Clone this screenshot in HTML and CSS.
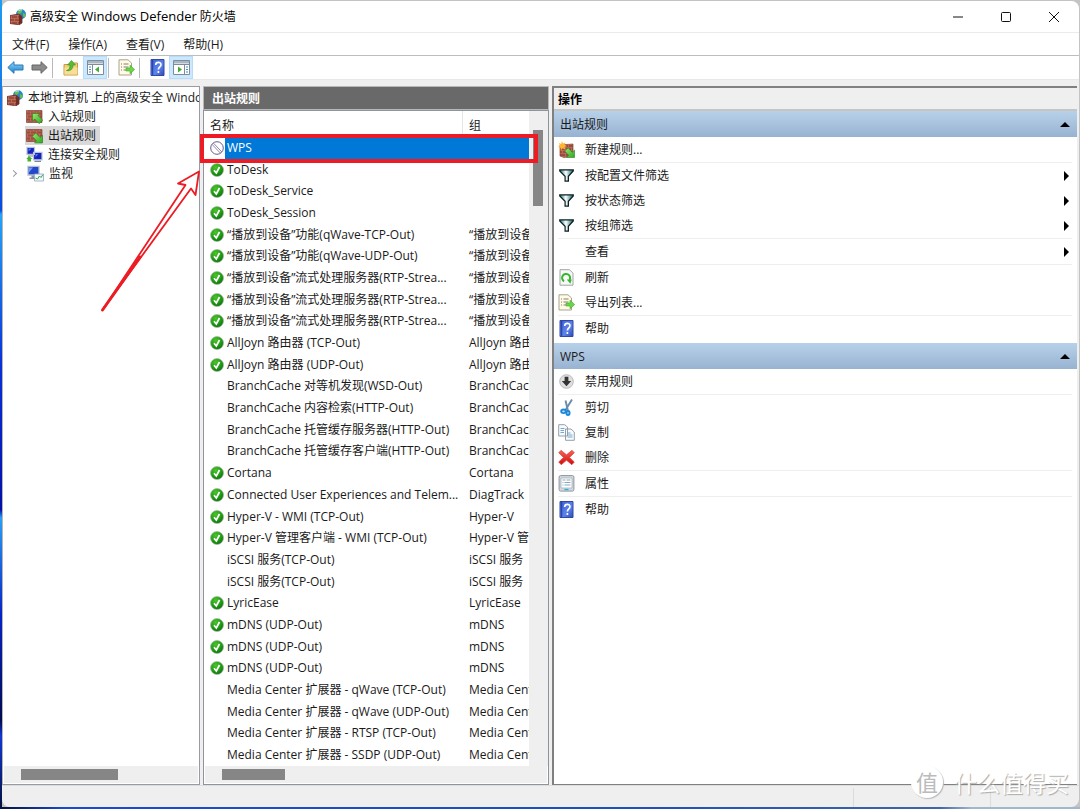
FILE: index.html
```html
<!DOCTYPE html>
<html lang="zh-CN">
<head>
<meta charset="utf-8">
<title>高级安全 Windows Defender 防火墙</title>
<link rel="stylesheet" href="styles.css">
</head>
<body>
<svg class="defs" aria-hidden="true">
  <defs>
    <radialGradient id="gGreen" cx=".4" cy=".3" r=".75"><stop offset="0" stop-color="#4cc42c"/><stop offset=".6" stop-color="#1f9a14"/><stop offset="1" stop-color="#0c6a0c"/></radialGradient>
    <linearGradient id="gBlue" x1="0" y1="0" x2="0" y2="1"><stop offset="0" stop-color="#8fd4f7"/><stop offset="1" stop-color="#1583cf"/></linearGradient>
    <linearGradient id="gHelp" x1="0" y1="0" x2="1" y2="1"><stop offset="0" stop-color="#3d62d8"/><stop offset=".6" stop-color="#5d83ea"/><stop offset="1" stop-color="#2d48b0"/></linearGradient>
    <linearGradient id="gArrow" x1="0" y1="0" x2="1" y2="1"><stop offset="0" stop-color="#9be86e"/><stop offset="1" stop-color="#2fa524"/></linearGradient>
    <linearGradient id="gRed" x1="0" y1="0" x2="0" y2="1"><stop offset="0" stop-color="#f4655c"/><stop offset="1" stop-color="#d40a08"/></linearGradient>
    <linearGradient id="gFunnel" x1="0" y1="0" x2="1" y2="0"><stop offset="0" stop-color="#0e8080"/><stop offset=".45" stop-color="#ffffff"/><stop offset="1" stop-color="#0b5f66"/></linearGradient>
    <pattern id="brick" width="6" height="6" patternUnits="userSpaceOnUse"><rect width="6" height="6" fill="#a04a3a"/><path d="M0 .5h6M0 3.5h6M1.500 .5v3M4.500 3.500v3" stroke="#c08072" stroke-width=".6"/></pattern>
  </defs>
  <symbol id="wall" viewBox="0 0 16 16"><circle cx="11" cy="5.200" r="5" fill="#2a86c8"/><path d="M8 2c2-1.500 4-1 4 .5s-2 1.500-2 3-2 0-2.500-1zM13 4l3 1.500-1 3-2-1z" fill="#63c04c"/><path d="M8.500 1.500q2-1 3.500-.5" stroke="#d8f0fb" fill="none"/><path d="M0 6.500l9-1.500 3 2.500V14l-3 1.800-9-1.300z" fill="url(#brick)" stroke="#6e2a22" stroke-width=".8"/><path d="M9 5.500V15.500l3-2V7.500z" fill="#702c25"/></symbol>
  <symbol id="inbound" viewBox="0 0 17 16"><path d="M.5 2h15.500v12H.5z" fill="url(#brick)" stroke="#8d4034" stroke-width=".7"/><path d="M6.500 5h7.500l-2 2 4.700 4.500-3.500 3.700-4.500-4.700-2.200 2.200z" fill="url(#gArrow)" stroke="#25821d" stroke-width=".6"/></symbol>
  <symbol id="outbound" viewBox="0 0 17 16"><path d="M.5 2h15.500v12H.5z" fill="url(#brick)" stroke="#8d4034" stroke-width=".7"/><path d="M16.500 15.500H8.500l2.200-2.200-4.500-4.300L9.700 5.500l4.500 4.500 2.300-2.200z" fill="url(#gArrow)" stroke="#25821d" stroke-width=".6"/></symbol>
  <symbol id="newrule" viewBox="0 0 17 17"><path d="M2 4l13-1v12l-9 1.500L2 15z" fill="url(#brick)" stroke="#8d4034" stroke-width=".7"/><path d="M16.500 16.500H8.500l2.200-2.200-4-4.300 3.500-3.200 4 4.500 2.300-2.200z" fill="url(#gArrow)" stroke="#25821d" stroke-width=".6"/><path d="M4 0l1 2.500L7.500 1.500l-1 2.300L9 5 6.500 6l.8 2.500L4.500 7.300 3 9.500 2.500 6.800 0 6l2-1.500L.8 2l2.400 1z" fill="#ffb52e"/></symbol>
  <symbol id="network" viewBox="0 0 17 16"><path d="M1 .8h7.500v7H1zM7.500 5.800h8.500v7.500H7.500z" fill="#1623bd" stroke="#b9c3d6" stroke-width="1.200"/><path d="M2.500 2l3 0-3 3zM9.500 7.500h3l-3 3z" fill="#4f7cf0"/><path d="M2 9h5v1H2zM8.500 14.300h6.500v1.200H8.500z" fill="#7b8798"/><path d="M3 9.500l3.500 3H5v2.500H1.500v-2.500H.3z" fill="#46b52e"/></symbol>
  <symbol id="monitor" viewBox="0 0 17 16"><path d="M1 .8h11V9.500H1z" fill="#2548cb" stroke="#b4bfd2" stroke-width="1.300"/><path d="M2 2h4L2 7z" fill="#6f9bf5"/><path d="M4.500 10h3v2h-3zM2.500 12h7v1.500h-7z" fill="#8792a4"/><path d="M7.500 8.500h9v7h-9z" fill="#f2f7fb" stroke="#91a7bb" stroke-width=".8"/><path d="M8.500 12.500l2 1 2-3 1.500 1.500 2-3" stroke="#35a64d" fill="none"/></symbol>
  <symbol id="ok" viewBox="0 0 14 14"><circle cx="7" cy="7" r="6.500" fill="url(#gGreen)" stroke="#a5b8a0" stroke-width=".7"/><path d="M4 7.300l2.300 2.700L9.500 4" stroke="#fff" stroke-width="1.700" fill="none"/></symbol>
  <symbol id="block" viewBox="0 0 16 16"><circle cx="8" cy="8" r="7.200" fill="#fff" stroke="#64538a" stroke-width="1.100"/><path d="M4 2.500l9.500 10M2.500 4l9.500 10" stroke="#64538a" stroke-width=".8"/></symbol>
  <symbol id="back" viewBox="0 0 17 14"><path d="M.8 7L7 1.200v3.300h9v5H7v3.300z" fill="url(#gBlue)" stroke="#2c78b4"/></symbol>
  <symbol id="fwd" viewBox="0 0 17 14"><path d="M16.200 7L10 1.200v3.300H1v5h9v3.300z" fill="#8b8b8b" stroke="#646464"/></symbol>
  <symbol id="folder" viewBox="0 0 16 16"><path d="M1 4.500h5l1-1.500h7.500v12H1z" fill="#efcf78" stroke="#c39b45"/><path d="M1.500 7.500h13v7h-13z" fill="#f8df95"/><path d="M3.500 10.500C6 10 7 8 7 5H4.500L8.500.5l4 4.500H10c0 4-2.500 6.500-6.500 5.500z" fill="#57bd35" stroke="#38901f" stroke-width=".6"/></symbol>
  <symbol id="paneL" viewBox="0 0 17 15"><path d="M.5.5h16v14H.5z" fill="#fff" stroke="#7c8c9b"/><path d="M1 1h15v2.500H1z" fill="#a9b7c4"/><path d="M1 4.500h15" stroke="#7c8c9b"/><path d="M5.500 4.500v10" stroke="#7c8c9b"/><path d="M2 7h2M2 9.500h2M2 12h2" stroke="#4b88c0"/><path d="M12 6.500v6L8 9.500z" fill="#42ab32"/></symbol>
  <symbol id="paneR" viewBox="0 0 17 15"><path d="M.5.5h16v14H.5z" fill="#fff" stroke="#7c8c9b"/><path d="M1 1h15v2.500H1z" fill="#a9b7c4"/><path d="M1 4.500h15" stroke="#7c8c9b"/><path d="M11.500 4.500v10" stroke="#7c8c9b"/><path d="M13 7h2M13 9.500h2M13 12h2" stroke="#4b88c0"/><path d="M5 6.500v6l4-3z" fill="#42ab32"/></symbol>
  <symbol id="export" viewBox="0 0 17 17"><path d="M1 .8h9L13.500 4v12H1z" fill="#fffbe5" stroke="#aaa38b"/><path d="M3 5h1M3 8h1M3 11h1M5.500 5h5M5.500 8h5M5.500 11h3" stroke="#817f78" stroke-width="1.200"/><path d="M8 9h4V6.200l4.700 4.300-4.700 4.300V12H8z" fill="#68d744" stroke="#48a935" stroke-width=".6"/></symbol>
  <symbol id="help" viewBox="0 0 14 17"><path d="M.5.500h13v16H.5z" fill="url(#gHelp)" stroke="#3049a4"/><path d="M2.200 1v15" stroke="#233c99"/><path d="M5.200 6c0-3.500 5.300-3.300 5.300-.3 0 2-2.600 2.300-2.600 4.800M7.900 12v2" stroke="#fff" stroke-width="1.600" fill="none"/></symbol>
  <symbol id="funnel" viewBox="0 0 16 14"><path d="M.8 1h14.400v1.200L10 7.800V13H6.500V7.800L.8 2.200z" fill="url(#gFunnel)" stroke="#0c1f22" stroke-width="1.300"/></symbol>
  <symbol id="refresh" viewBox="0 0 15 17"><path d="M1 .7h9.500l3.500 3.500v12H1z" fill="#f7f8f7" stroke="#9fa5a0"/><path d="M5 12.300A4 4 0 1 1 10.500 11" stroke="#36b62d" stroke-width="2" fill="none"/><path d="M7.800 10.500h5l-1.500 4.300z" fill="#36b62d"/></symbol>
  <symbol id="disable" viewBox="0 0 16 16"><circle cx="8" cy="8" r="7.300" fill="#dedede" stroke="#a9a9a9" stroke-width=".8"/><path d="M6 3h4v4.500h3L8 13 3 7.500h3z" fill="#333"/></symbol>
  <symbol id="cut" viewBox="0 0 14 17"><path d="M12.500.5L6 11M6 1.500L8.500 12" stroke="#6b8ba7" stroke-width="1.900" fill="none"/><ellipse cx="4" cy="12.300" rx="2.300" ry="1.800" fill="#bfe2fb" stroke="#1b88dc" stroke-width="1.900"/><ellipse cx="8.500" cy="14" rx="1.600" ry="2" fill="#bfe2fb" stroke="#1b88dc" stroke-width="1.900"/></symbol>
  <symbol id="copy" viewBox="0 0 17 17"><path d="M.7.700h6L9.500 3v9H.7zM7.500 5h5.500L16.300 8v8.300H7.500z" fill="#f7fafc" stroke="#94a0aa"/><path d="M2.500 4.500h4M2.500 6.500h3.500M2.500 8.500h3.500M9.500 9h3M9.500 11h5M9.500 13h5" stroke="#7ba6cf"/></symbol>
  <symbol id="del" viewBox="0 0 17 16"><path d="M3 .8l5.500 4.500L14 .8l2.300 2.400L11.500 8l4.800 4.500-2.500 2.700-5.300-4.500-5.300 4.500L.7 12.500 5.500 8 .7 3.200z" fill="url(#gRed)" stroke="#d5453e" stroke-width=".7"/></symbol>
  <symbol id="props" viewBox="0 0 16 17"><rect x=".6" y=".6" width="14.800" height="15.500" rx="1.500" fill="#d5dade" stroke="#8c969e"/><path d="M2.500 3h11v10h-11z" fill="#fff" stroke="#9ba9b4" stroke-width=".7"/><path d="M4 5h3M8 5h4M4 7.500h1M6 7.500h6M4 10h1M6 10h6" stroke="#8aa6be"/><path d="M6 14.500h4" stroke="#21b4e3" stroke-width="1.300"/></symbol>
  <symbol id="up" viewBox="0 0 10 5"><path d="M0 5L5 0l5 5z"/></symbol>
  <symbol id="right" viewBox="0 0 5 10"><path d="M0 0l5 5-5 5z"/></symbol>
</svg>

<div class="window">
  <header class="titlebar">
    <svg class="i16"><use href="#wall"/></svg>
    <h1>高级安全 <span class="lat">Windows Defender</span> 防火墙</h1>
    <div class="winbtns">
      <button aria-label="最小化"><svg viewBox="0 0 12 12"><path d="M1 6h10"/></svg></button>
      <button aria-label="最大化"><svg viewBox="0 0 12 12"><rect x="1.500" y="1.500" width="9" height="9" rx="1"/></svg></button>
      <button aria-label="关闭"><svg viewBox="0 0 12 12"><path d="M1 1l10 10M11 1L1 11"/></svg></button>
    </div>
  </header>
  <nav class="menubar">
    <button>文件(F)</button><button>操作(A)</button><button>查看(V)</button><button>帮助(H)</button>
  </nav>
  <div class="toolbar">
    <button aria-label="后退"><svg class="i17"><use href="#back"/></svg></button>
    <button aria-label="前进"><svg class="i17"><use href="#fwd"/></svg></button>
    <span class="tsep"></span>
    <button aria-label="上一级"><svg class="i16"><use href="#folder"/></svg></button>
    <button class="on" aria-label="显示控制台树"><svg class="i17"><use href="#paneL"/></svg></button>
    <span class="tsep tight"></span>
    <button aria-label="导出列表"><svg class="i17"><use href="#export"/></svg></button>
    <span class="tsep tight"></span>
    <button aria-label="帮助"><svg class="i17"><use href="#help"/></svg></button>
    <button class="on" aria-label="显示操作窗格"><svg class="i17"><use href="#paneR"/></svg></button>
  </div>

  <main class="panes">
    <section class="pane tree">
      <ul class="nodes">
        <li class="root"><svg class="i16"><use href="#wall"/></svg><span>本地计算机 上的高级安全 Windows</span></li>
        <li><svg class="i17"><use href="#inbound"/></svg><span>入站规则</span></li>
        <li class="sel"><svg class="i17"><use href="#outbound"/></svg><span>出站规则</span></li>
        <li><svg class="i17"><use href="#network"/></svg><span>连接安全规则</span></li>
        <li class="parent"><svg class="i17"><use href="#monitor"/></svg><span>监视</span></li>
      </ul>
      <div class="hscroll"><div class="thumb wide"></div></div>
    </section>

    <section class="middle">
      <h2>出站规则</h2>
      <div class="list">
        <table>
          <thead><tr><th>名称</th><th>组</th></tr></thead>
          <tbody>
            <tr class="picked"><td><svg class="ic"><use href="#block"/></svg><span>WPS</span></td><td></td></tr>
            <tr><td><svg class="ic"><use href="#ok"/></svg><span>ToDesk</span></td><td></td></tr>
            <tr><td><svg class="ic"><use href="#ok"/></svg><span>ToDesk_Service</span></td><td></td></tr>
            <tr><td><svg class="ic"><use href="#ok"/></svg><span>ToDesk_Session</span></td><td></td></tr>
            <tr><td><svg class="ic"><use href="#ok"/></svg><span>“播放到设备”功能(qWave-TCP-Out)</span></td><td>“播放到设备”</td></tr>
            <tr><td><svg class="ic"><use href="#ok"/></svg><span>“播放到设备”功能(qWave-UDP-Out)</span></td><td>“播放到设备”</td></tr>
            <tr><td><svg class="ic"><use href="#ok"/></svg><span>“播放到设备”流式处理服务器(RTP-Strea...</span></td><td>“播放到设备”</td></tr>
            <tr><td><svg class="ic"><use href="#ok"/></svg><span>“播放到设备”流式处理服务器(RTP-Strea...</span></td><td>“播放到设备”</td></tr>
            <tr><td><svg class="ic"><use href="#ok"/></svg><span>“播放到设备”流式处理服务器(RTP-Strea...</span></td><td>“播放到设备”</td></tr>
            <tr><td><svg class="ic"><use href="#ok"/></svg><span>AllJoyn 路由器 (TCP-Out)</span></td><td>AllJoyn 路由器</td></tr>
            <tr><td><svg class="ic"><use href="#ok"/></svg><span>AllJoyn 路由器 (UDP-Out)</span></td><td>AllJoyn 路由器</td></tr>
            <tr><td><span>BranchCache 对等机发现(WSD-Out)</span></td><td>BranchCache</td></tr>
            <tr><td><span>BranchCache 内容检索(HTTP-Out)</span></td><td>BranchCache</td></tr>
            <tr><td><span>BranchCache 托管缓存服务器(HTTP-Out)</span></td><td>BranchCache</td></tr>
            <tr><td><span>BranchCache 托管缓存客户端(HTTP-Out)</span></td><td>BranchCache</td></tr>
            <tr><td><svg class="ic"><use href="#ok"/></svg><span>Cortana</span></td><td>Cortana</td></tr>
            <tr><td><svg class="ic"><use href="#ok"/></svg><span>Connected User Experiences and Telem...</span></td><td>DiagTrack</td></tr>
            <tr><td><svg class="ic"><use href="#ok"/></svg><span>Hyper-V - WMI (TCP-Out)</span></td><td>Hyper-V</td></tr>
            <tr><td><svg class="ic"><use href="#ok"/></svg><span>Hyper-V 管理客户端 - WMI (TCP-Out)</span></td><td>Hyper-V 管理</td></tr>
            <tr><td><span>iSCSI 服务(TCP-Out)</span></td><td>iSCSI 服务</td></tr>
            <tr><td><span>iSCSI 服务(TCP-Out)</span></td><td>iSCSI 服务</td></tr>
            <tr><td><svg class="ic"><use href="#ok"/></svg><span>LyricEase</span></td><td>LyricEase</td></tr>
            <tr><td><svg class="ic"><use href="#ok"/></svg><span>mDNS (UDP-Out)</span></td><td>mDNS</td></tr>
            <tr><td><svg class="ic"><use href="#ok"/></svg><span>mDNS (UDP-Out)</span></td><td>mDNS</td></tr>
            <tr><td><svg class="ic"><use href="#ok"/></svg><span>mDNS (UDP-Out)</span></td><td>mDNS</td></tr>
            <tr><td><span>Media Center 扩展器 - qWave (TCP-Out)</span></td><td>Media Center</td></tr>
            <tr><td><span>Media Center 扩展器 - qWave (UDP-Out)</span></td><td>Media Center</td></tr>
            <tr><td><span>Media Center 扩展器 - RTSP (TCP-Out)</span></td><td>Media Center</td></tr>
            <tr><td><span>Media Center 扩展器 - SSDP (UDP-Out)</span></td><td>Media Center</td></tr>
          </tbody>
        </table>
        <div class="vscroll"><div class="thumb"></div></div>
        <div class="hscroll"><div class="thumb"></div></div>
      </div>
    </section>

    <section class="actions">
      <h2>操作</h2>
      <h3>出站规则<svg class="up"><use href="#up"/></svg></h3>
      <ul>
        <li class="line"><button><svg class="i17"><use href="#newrule"/></svg>新建规则...</button></li>
        <li><button><svg class="i15"><use href="#funnel"/></svg>按配置文件筛选<svg class="right"><use href="#right"/></svg></button></li>
        <li><button><svg class="i15"><use href="#funnel"/></svg>按状态筛选<svg class="right"><use href="#right"/></svg></button></li>
        <li class="line"><button><svg class="i15"><use href="#funnel"/></svg>按组筛选<svg class="right"><use href="#right"/></svg></button></li>
        <li class="line"><button><span class="i17"></span>查看<svg class="right"><use href="#right"/></svg></button></li>
        <li><button><svg class="i17"><use href="#refresh"/></svg>刷新</button></li>
        <li class="line"><button><svg class="i17"><use href="#export"/></svg>导出列表...</button></li>
        <li><button><svg class="i17"><use href="#help"/></svg>帮助</button></li>
      </ul>
      <h3>WPS<svg class="up"><use href="#up"/></svg></h3>
      <ul>
        <li class="line"><button><svg class="i15"><use href="#disable"/></svg>禁用规则</button></li>
        <li><button><svg class="i17"><use href="#cut"/></svg>剪切</button></li>
        <li><button><svg class="i17"><use href="#copy"/></svg>复制</button></li>
        <li class="line"><button><svg class="i17"><use href="#del"/></svg>删除</button></li>
        <li class="line"><button><svg class="i17"><use href="#props"/></svg>属性</button></li>
        <li><button><svg class="i17"><use href="#help"/></svg>帮助</button></li>
      </ul>
    </section>
  </main>
  <footer class="status"><span></span><span></span><span></span></footer>
</div>

<div class="mark-box"></div>
<svg class="mark-arrow" viewBox="0 0 102 144"><path d="M2.500 141L85.500 16 78 14.500 99 2.500 95.500 26 91 19.500z" fill="none" stroke="#ed1c24" stroke-width="1.800" stroke-linejoin="round"/><path d="M2.500 141L40 88" stroke="#ed1c24" stroke-width="3" stroke-linecap="round"/></svg>
<div class="watermark"><span class="seal">值</span><span>什么值得买</span></div>
</body>
</html>
```

FILE: styles.css
```css
* { box-sizing: border-box; }
body {
  margin: 0;
  height: 100vh;
  padding: 1px 1px 2px 2px;
  overflow: hidden;
  position: relative;
  color: #1a1a1a;
  font: 12px/18px "Open Sans", "Noto Sans CJK SC", sans-serif;
  background:
    linear-gradient(#1f9df0, #0a4be0 26%, #25a5fa 26.500%, #0a32d8 45%, #0410a8 63%, #2ba0f5 64%, #0624c8 76%, #020a50 89%, #1238d8 91%, #04103c) left / 2px 100% no-repeat,
    linear-gradient(90deg, #06103c, #1a4ad0 6%, #2050b8 60%, #4265a8 87%, #9fb8d0 90%) bottom / 100% 2px no-repeat,
    #c4c4c4;
}
h1, h2, h3, ul { margin: 0; padding: 0; font: inherit; }
ul { list-style: none; }
button { border: 0; padding: 0; margin: 0; background: none; color: inherit; font: inherit; }
svg { display: block; flex: none; }
.defs { position: absolute; width: 0; height: 0; }
.i15 { width: 15px; height: 15px; }
.i16 { width: 16px; height: 16px; }
.i17 { width: 17px; height: 17px; }

.window {
  height: 100%;
  display: flex;
  flex-direction: column;
  background: #efefef;
  border-radius: 8px;
  overflow: hidden;
}
.titlebar {
  display: flex;
  align-items: center;
  gap: 4px;
  height: 32px;
  padding: 0 1px 0 8px;
  background: #fff;
  border-bottom: 1px solid #ebebeb;
  color: #000;
}
.lat { font-size: 13px; }
.winbtns { display: flex; margin-left: auto; }
.winbtns button { width: 48px; height: 31px; display: grid; place-items: center; }
.winbtns svg { width: 12px; height: 12px; fill: none; stroke: #111; stroke-width: 1; }

.menubar {
  display: flex;
  gap: 19px;
  height: 23px;
  padding: 1px 10px 0;
  background: #fff;
  border-bottom: 1px solid #bdbdbd;
}
.toolbar {
  display: flex;
  align-items: center;
  height: 24px;
  padding-left: 1px;
  background: #fff;
  border-bottom: 1px solid #e8e8e8;
}
.toolbar button { width: 24px; height: 23px; display: grid; place-items: center; }
.toolbar .on { background: #cce8ff; border: 1px solid #b5dcfa; }
.tsep { width: 1px; height: 20px; margin: 0 6px 0 1px; background: #b9b9b9; }
.tsep.tight { margin: 0 5px 0 1px; }

.panes {
  flex: 1;
  min-height: 0;
  display: grid;
  grid-template-columns: 198px 346px minmax(0, 1fr);
  column-gap: 3px;
  padding-top: 6px;
}
.pane, .middle, .actions { min-width: 0; min-height: 0; display: flex; flex-direction: column; }
.tree { background: #fff; border: 1px solid #979ba3; border-left-color: #b5b5b5; }
.nodes { flex: 1; overflow: hidden; padding-top: 1px; }
.nodes li { display: flex; align-items: center; gap: 5px; height: 19px; padding-left: 23px; white-space: nowrap; overflow: hidden; }
.nodes .root { padding-left: 4px; }
.nodes .root span { min-width: 0; overflow: hidden; }
.nodes .sel { width: max-content; margin-left: 22px; padding: 0 4px 0 1px; background: #d9d9d9; }
.nodes .parent { padding-left: 10px; }
.nodes .parent::before { content: ""; width: 4px; height: 4px; margin: 0 6px 0 -2px; border: solid #999; border-width: 1px 1px 0 0; transform: rotate(45deg); }
.hscroll { height: 18px; padding: 3px 17px; background: #efefef; border: solid #fff; border-width: 0 1px 1px; }
.thumb { background: #868686; height: 11px; width: 63px; }
.thumb.wide { width: 97px; }

.middle h2 {
  height: 24px;
  padding-left: 8px;
  line-height: 23px;
  background: #696969;
  border: 1px solid #b8b8b8;
  color: #fff;
  font-weight: 700;
}
.list {
  flex: 1;
  min-height: 0;
  display: grid;
  grid-template: minmax(0, 1fr) 18px / minmax(0, 1fr) 19px;
  background: #fff;
  border: 1px solid #8e939c;
}
.list .hscroll { grid-column: 1 / 3; }
.vscroll { padding: 19px 4px 0; background: #efefef; }
.vscroll .thumb { width: 10px; height: 76px; }
table { display: flex; flex-direction: column; min-width: 0; }
tbody { flex: 1; display: flex; flex-direction: column; }
tr { display: grid; grid-template-columns: minmax(0, 1fr) 67px; }
tbody tr { flex: 1; align-items: center; }
thead tr { height: 26px; }
th { padding: 6px 0 0 6px; font-weight: 400; text-align: left; }
th + th { border-left: 1px solid #e5e5e5; }
td { position: relative; padding: 0 0 0 23px; white-space: nowrap; overflow: hidden; }
td + td { padding: 0 0 0 7px; }
td .ic { position: absolute; left: 6px; top: 2px; width: 14px; height: 14px; }
.picked { color: #fff; background: linear-gradient(90deg, #fff 21px, #0078d7 21px); }

.actions { background: #fff; border: 2px solid #808080; border-width: 2px 0 1px 2px; margin-right: 2px; }
.actions h2 { height: 23px; padding-left: 4px; line-height: 23px; background: #efefef; border-bottom: 2px solid #c6c6c0; color: #000; font-weight: 700; }
.actions h3 {
  display: flex;
  align-items: center;
  justify-content: space-between;
  height: 26px;
  padding: 1px 7px 0 6px;
  background: linear-gradient(#b8d1ea, #98b3d1);
}
.actions ul { padding: 0 5px 2px 4px; }
.line { border-bottom: 1px solid #eee; }
.actions li button { display: flex; align-items: center; gap: 10px; width: 100%; height: 25px; text-align: left; }
.actions .i15 { margin: 0 1px; }
.up { width: 10px; height: 5px; }
.actions .right { width: 5px; height: 10px; margin: 0 3px 0 auto; }

.status { height: 22px; display: grid; grid-template-columns: 1fr 137px 89px; padding-top: 2px; border-top: 1px solid #ddd; }
.status span + span { border-left: 1px solid #dcdcdc; }

.mark-box { position: absolute; left: 200px; top: 134px; width: 338px; height: 29px; border: 4px solid #ed1c24; }
.mark-arrow { position: absolute; left: 100px; top: 169px; width: 102px; height: 144px; }
.watermark {
  position: absolute;
  right: 11px;
  bottom: 10px;
  display: flex;
  align-items: center;
  gap: 11px;
  color: #fff;
  font: 23px/34px "Noto Sans CJK SC", sans-serif;
  text-shadow: 1px 1px 1px #aaa;
}
.seal {
  width: 32px;
  height: 32px;
  border-radius: 50%;
  background: #fff;
  box-shadow: 1px 1px 1px #bbb;
  color: #bbb;
  font-size: 22px;
  line-height: 30px;
  text-align: center;
  text-shadow: none;
}
```
